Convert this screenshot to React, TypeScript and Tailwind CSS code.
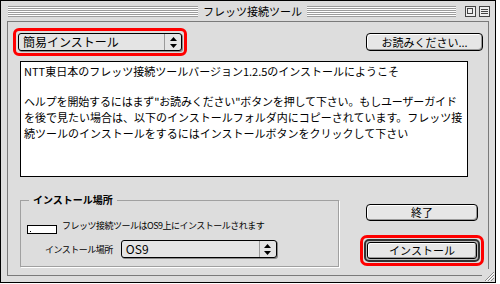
import React from "react";

function ArrowsIcon() {
  return (
    <svg width="7" height="11" viewBox="0 0 7 11">
      <polygon points="3.5,0 7,4 0,4" fill="#000" />
      <polygon points="0,7 7,7 3.5,11" fill="#000" />
    </svg>
  );
}

function Popup({ label, width }: { label: string; width: string }) {
  return (
    <div
      className={`${width} h-[18px] flex items-stretch border border-black rounded-[3px] bg-[#e4e4e4] shadow-[1px_1px_0_#8a8a8a]`}
    >
      <div className="flex-1 flex items-center pl-[4px] text-[12px] leading-none text-black whitespace-nowrap">
        {label}
      </div>
      <div className="w-[17px] border-l border-[#9a9a9a] flex items-center justify-center">
        <ArrowsIcon />
      </div>
    </div>
  );
}

function Stripes({ className }: { className: string }) {
  return (
    <div
      className={`${className} h-[11px] bg-[repeating-linear-gradient(to_bottom,#9c9c9c_0px,#9c9c9c_1px,#ffffff_1px,#ffffff_2px)]`}
    />
  );
}

export default function App() {
  return (
    <div className="w-[500px] h-[284px] bg-white font-['Noto_Sans_CJK_JP','Noto_Sans',sans-serif] text-black">
      <div className="w-[496px] h-[283px] border border-black bg-[#dddddd] flex flex-col relative">
        {/* Title bar */}
        <div className="h-[20px] flex items-center pl-[7px] pr-[5px]">
          <Stripes className="w-[190px]" />
          <div className="px-[5px] text-[11px] leading-none whitespace-nowrap">
            フレッツ接続ツール
          </div>
          <Stripes className="flex-1" />
          <div className="ml-[9px] w-[11px] h-[11px] border border-[#444] bg-[#eee] relative">
            <div className="absolute left-[1px] top-[1px] w-[6px] h-[6px] border border-[#444]" />
          </div>
          <div className="ml-[3px] w-[11px] h-[11px] border border-[#444] bg-[#eee] flex flex-col justify-center gap-[1px] px-[1px]">
            <div className="h-px bg-[#444]" />
            <div className="h-px bg-[#444]" />
            <div className="h-px bg-[#444]" />
          </div>
        </div>

        {/* Content panel */}
        <div className="flex-1 mx-[6px] mb-[6px] border border-[#7a7a7a] bg-[#dddddd] flex flex-col">
          {/* Top row */}
          <div className="flex items-start mt-[6px]">
            <div className="ml-[5px] border-[3px] border-[#ff0000] rounded-[6px] px-[2px] py-[2px]">
              <Popup label="簡易インストール" width="w-[164px]" />
            </div>
            <div className="ml-auto mr-[5px] mt-[5px] w-[117px] h-[18px] border border-black rounded-[4px] bg-[#e6e6e6] shadow-[inset_-1px_-1px_0_#9a9a9a,inset_1px_1px_0_#fff] flex items-center justify-center text-[11px] leading-none">
              お読みください...
            </div>
          </div>

          {/* Text area */}
          <div className="ml-[12px] mt-[5px] w-[448px] h-[116px] border border-black bg-white pl-[3px] pt-[1px] text-[11px] leading-[16px] whitespace-nowrap">
            <div>NTT東日本のフレッツ接続ツールバージョン1.2.5のインストールにようこそ</div>
            <div className="h-[14px]" />
            <div className="tracking-[-0.15px]">ヘルプを開始するにはまず"お読みください"ボタンを押して下さい。もしユーザーガイド</div>
            <div>を後で見たい場合は、以下のインストールフォルダ内にコピーされています。フレッツ接</div>
            <div>続ツールのインストールをするにはインストールボタンをクリックして下さい</div>
          </div>

          {/* Bottom row */}
          <div className="flex items-start mt-[23px]">
            <div className="ml-[12px] w-[319px] h-[67px] border border-[#a0a0a0] shadow-[1px_1px_0_#fff] relative">
              <div className="absolute left-[8px] top-[-8px] px-[4px] bg-[#dddddd] text-[10px] leading-[14px] font-bold">
                インストール場所
              </div>
              <div className="flex items-end mt-[20px] ml-[6px]">
                <div className="w-[30px] h-[9px] border border-black bg-white relative">
                  <div className="absolute left-[2px] bottom-[1px] w-px h-px bg-black" />
                </div>
                <div className="ml-[5px] mb-[4px] text-[9px] tracking-[-0.5px] leading-none whitespace-nowrap">
                  フレッツ接続ツールはOS9上にインストールされます
                </div>
              </div>
              <div className="flex items-center mt-[6px] ml-[24px]">
                <div className="text-[9px] tracking-[-0.5px] leading-none whitespace-nowrap mr-[8px]">
                  インストール場所
                </div>
                <Popup label="OS9" width="w-[156px]" />
              </div>
            </div>

            <div className="ml-[21px] flex flex-col items-center mt-[4px]">
              <div className="w-[112px] h-[17px] border border-black rounded-[4px] bg-[#e6e6e6] shadow-[inset_-1px_-1px_0_#9a9a9a,inset_1px_1px_0_#fff] flex items-center justify-center text-[11px] leading-none">
                終了
              </div>
              <div className="mt-[14px] border-[3px] border-[#ff0000] rounded-[7px] p-px">
                <div className="border-[2px] border-[#333] rounded-[5px] p-px bg-[#bbb]">
                  <div className="w-[110px] h-[17px] border border-black rounded-[3px] bg-[#e6e6e6] shadow-[inset_-1px_-1px_0_#9a9a9a,inset_1px_1px_0_#fff] flex items-center justify-center text-[11px] leading-none">
                    インストール
                  </div>
                </div>
              </div>
            </div>
          </div>
        </div>

        {/* Grow box */}
        <div className="absolute right-0 bottom-0 w-[13px] h-[13px] bg-[#dddddd]">
          <svg width="13" height="13" viewBox="0 0 13 13">
            <line x1="3" y1="12" x2="12" y2="3" stroke="#888" />
            <line x1="6" y1="12" x2="12" y2="6" stroke="#888" />
            <line x1="9" y1="12" x2="12" y2="9" stroke="#888" />
            <line x1="4" y1="12" x2="12" y2="4" stroke="#fff" />
            <line x1="7" y1="12" x2="12" y2="7" stroke="#fff" />
          </svg>
        </div>
      </div>
    </div>
  );
}
